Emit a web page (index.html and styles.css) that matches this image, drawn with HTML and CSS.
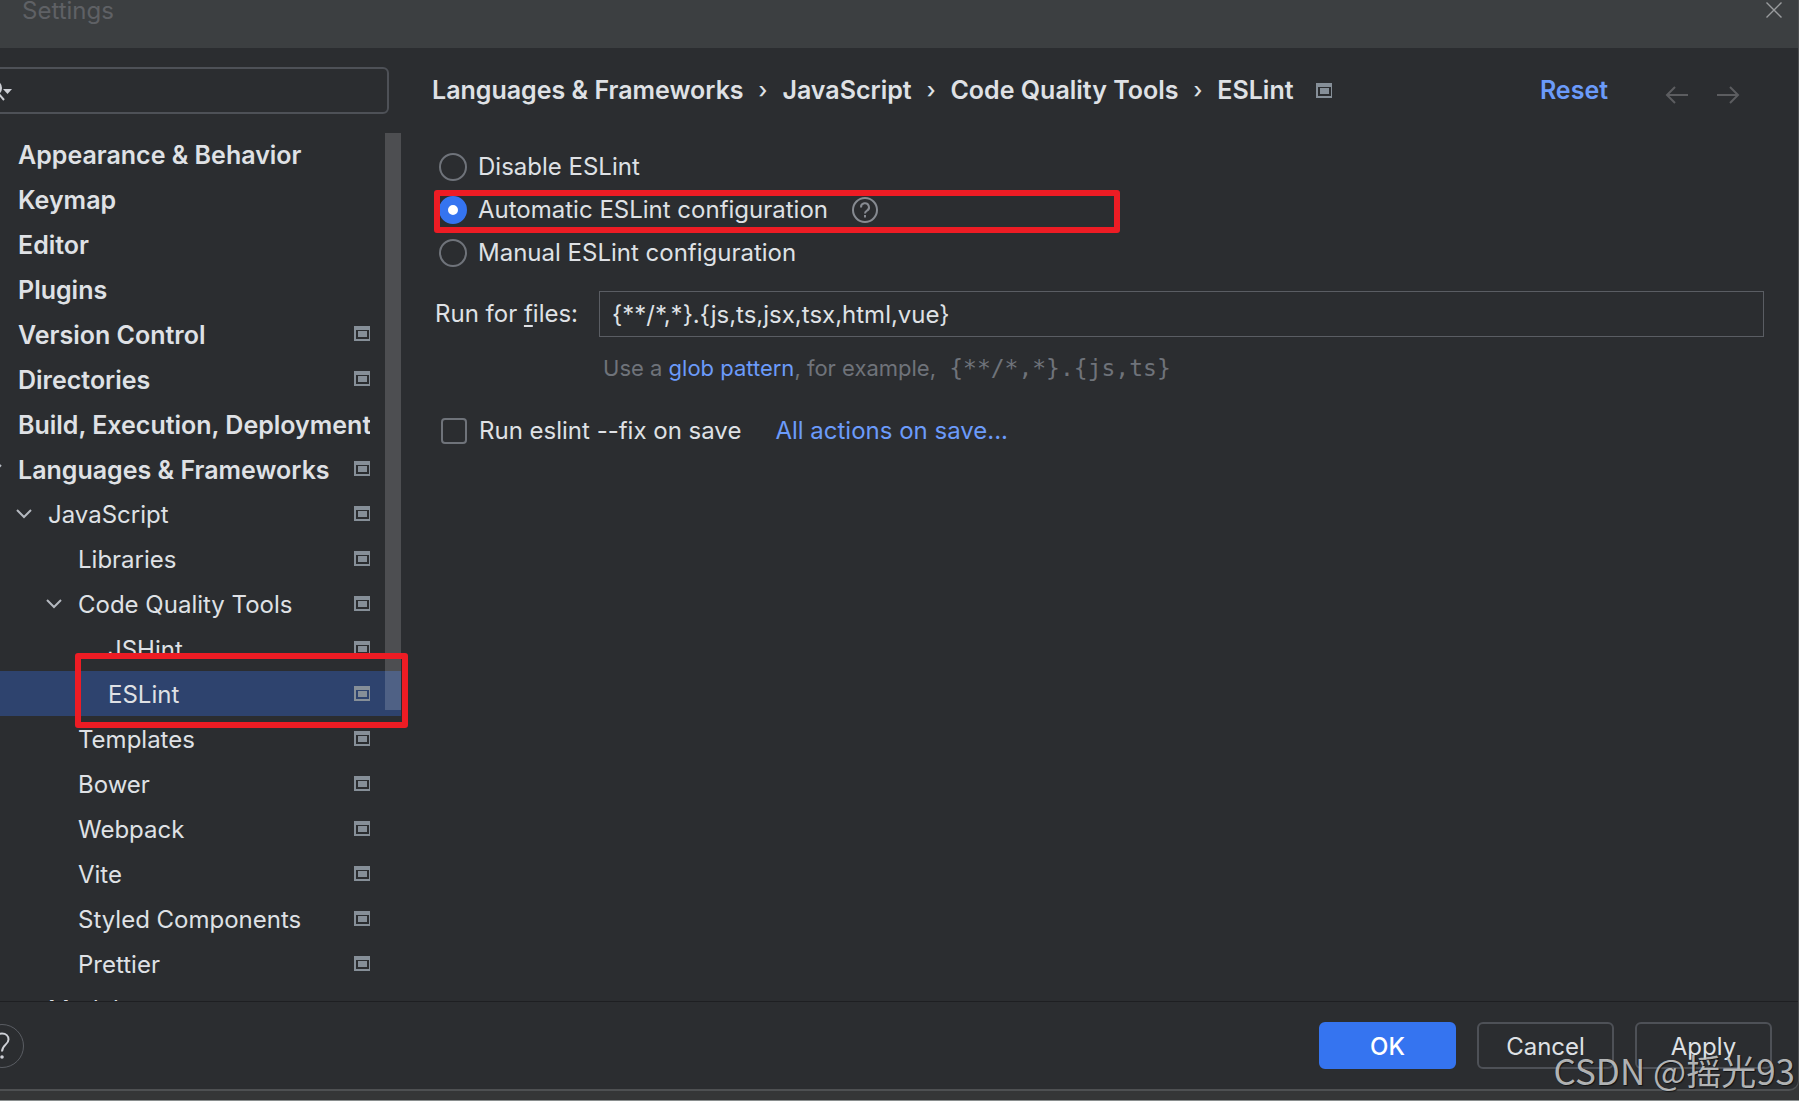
FILE: index.html
```html
<!DOCTYPE html>
<html lang="en">
<head>
<meta charset="utf-8">
<title>Settings</title>
<link rel="stylesheet" href="styles.css">
</head>
<body>
<svg width="0" height="0" class="defs" aria-hidden="true">
  <symbol id="project" viewBox="0 0 16 15"><path fill="currentColor" fill-rule="evenodd" d="M0 0h16v15H0zM2 4v9h13V4z"/><path fill="currentColor" d="M4 5h9v6H4z"/></symbol>
  <symbol id="chevron" viewBox="0 0 16 10"><path fill="none" stroke="currentColor" stroke-width="2" d="M1 1l7 7 7-7"/></symbol>
</svg>
<div class="window">
  <header class="titlebar">
    <h1>Settings</h1>
    <button class="icon-button" aria-label="Close"><svg width="16" height="16" viewBox="0 0 16 16"><path fill="none" stroke="#9a9c9e" stroke-width="1.4" d="M.5.5l15 15M15.5.5l-15 15"/></svg></button>
  </header>
  <div class="content">
    <aside class="sidebar">
      <div class="search">
        <svg width="28" height="24" viewBox="0 0 28 24" aria-hidden="true"><circle cx="8" cy="9" r="7" fill="none" stroke="#ced0d6" stroke-width="2"/><path stroke="#ced0d6" stroke-width="2" d="M12 14l6 7"/><path fill="#ced0d6" d="M17 10h9l-4.500 5z"/></svg>
        <input type="search" aria-label="Search settings">
      </div>
      <div class="tree-view">
        <ul class="tree">
          <li class="group"><span class="toggle"></span><span class="name">Appearance &amp; Behavior</span></li>
          <li class="group"><span class="toggle"></span><span class="name">Keymap</span></li>
          <li class="group"><span class="toggle"></span><span class="name">Editor</span></li>
          <li class="group"><span class="toggle"></span><span class="name">Plugins</span></li>
          <li class="group"><span class="toggle"></span><span class="name">Version Control</span><svg class="mark"><use href="#project"/></svg></li>
          <li class="group"><span class="toggle"></span><span class="name">Directories</span><svg class="mark"><use href="#project"/></svg></li>
          <li class="group"><span class="toggle"></span><span class="name">Build, Execution, Deployment</span></li>
          <li class="group"><svg class="toggle"><use href="#chevron"/></svg><span class="name">Languages &amp; Frameworks</span><svg class="mark"><use href="#project"/></svg></li>
          <li class="level-1"><svg class="toggle"><use href="#chevron"/></svg><span class="name">JavaScript</span><svg class="mark"><use href="#project"/></svg></li>
          <li class="level-2"><span class="toggle"></span><span class="name">Libraries</span><svg class="mark"><use href="#project"/></svg></li>
          <li class="level-2"><svg class="toggle"><use href="#chevron"/></svg><span class="name">Code Quality Tools</span><svg class="mark"><use href="#project"/></svg></li>
          <li class="level-3"><span class="toggle"></span><span class="name">JSHint</span><svg class="mark"><use href="#project"/></svg></li>
          <li class="level-3 selected"><span class="toggle"></span><span class="name">ESLint</span><svg class="mark"><use href="#project"/></svg><span class="callout callout-tree"></span></li>
          <li class="level-2"><span class="toggle"></span><span class="name">Templates</span><svg class="mark"><use href="#project"/></svg></li>
          <li class="level-2"><span class="toggle"></span><span class="name">Bower</span><svg class="mark"><use href="#project"/></svg></li>
          <li class="level-2"><span class="toggle"></span><span class="name">Webpack</span><svg class="mark"><use href="#project"/></svg></li>
          <li class="level-2"><span class="toggle"></span><span class="name">Vite</span><svg class="mark"><use href="#project"/></svg></li>
          <li class="level-2"><span class="toggle"></span><span class="name">Styled Components</span><svg class="mark"><use href="#project"/></svg></li>
          <li class="level-2"><span class="toggle"></span><span class="name">Prettier</span><svg class="mark"><use href="#project"/></svg></li>
          <li class="level-1"><span class="toggle"></span><span class="name">Modules</span></li>
        </ul>
        <span class="scroll-thumb"></span>
      </div>
    </aside>
    <main class="panel">
      <div class="panel-head">
        <nav class="breadcrumb" aria-label="Breadcrumb">
          <span>Languages &amp; Frameworks</span><span class="sep">›</span><span>JavaScript</span><span class="sep">›</span><span>Code Quality Tools</span><span class="sep">›</span><span>ESLint</span>
        </nav>
        <svg class="mark"><use href="#project"/></svg>
        <a class="reset" href="#">Reset</a>
        <div class="history">
          <button class="icon-button" aria-label="Back"><svg width="24" height="18" viewBox="0 0 24 18"><path fill="none" stroke="#5c5d60" stroke-width="2" d="M23 9H2M10 1L2 9l8 8"/></svg></button>
          <button class="icon-button" aria-label="Forward"><svg width="24" height="18" viewBox="0 0 24 18"><path fill="none" stroke="#5c5d60" stroke-width="2" d="M1 9h21M14 1l8 8-8 8"/></svg></button>
        </div>
      </div>
      <form class="form">
        <div class="radios">
          <label class="option"><input type="radio" name="mode"><span>Disable ESLint</span></label>
          <div class="option-row">
            <label class="option"><input type="radio" name="mode" checked><span>Automatic ESLint configuration</span></label>
            <svg width="26" height="26" viewBox="0 0 26 26" fill="none" stroke="#868a91" stroke-width="2"><circle cx="13" cy="13" r="12"/><path d="M9 10.500a4 4 0 1 1 6 3.200c-1.300.8-2 1.300-2 2.800"/><path d="M13 18v2.500"/></svg>
            <span class="callout callout-radio"></span>
          </div>
          <label class="option"><input type="radio" name="mode"><span>Manual ESLint configuration</span></label>
        </div>
        <div class="files">
          <label for="files">Run for <u>f</u>iles:</label>
          <input id="files" type="text" value="{**/*,*}.{js,ts,jsx,tsx,html,vue}">
          <p class="hint">Use a <a href="#">glob pattern</a>, for example, <code>{**/*,*}.{js,ts}</code></p>
        </div>
        <div class="save">
          <label class="option"><input type="checkbox"><span>Run eslint --fix on save</span></label>
          <a href="#">All actions on save...</a>
        </div>
      </form>
    </main>
  </div>
  <footer class="footer">
    <button class="help" aria-label="Help"><svg width="16" height="28" viewBox="0 0 16 28"><path fill="none" stroke="#ced0d6" stroke-width="2" d="M1 8c0-4 3-6.500 7-6.500s6.500 2.500 6.500 6c0 5-6.500 5.500-6.500 12"/><circle cx="8" cy="25" r="1.800" fill="#ced0d6"/></svg></button>
    <button class="button primary">OK</button>
    <button class="button">Cancel</button>
    <button class="button">Apply</button>
  </footer>
</div>
<span class="watermark">CSDN @摇光93</span>
</body>
</html>
```
FILE: styles.css
```css
* { box-sizing: border-box; }
html { height: 100%; background: #353637; }
body {
  position: relative;
  display: flex;
  height: 100vh;
  margin: 0;
  padding-bottom: 9px;
  border-bottom: 1px solid #8a8f8f;
  overflow: hidden;
  color: #dfe1e5;
  font: 24px/32px Inter, sans-serif;
}
button, input { font: inherit; color: inherit; }
a { color: #6b9bfa; text-decoration: none; }
.defs { position: absolute; }

.window {
  flex: 1;
  display: flex;
  flex-direction: column;
  min-width: 0;
  overflow: hidden;
  background: #2b2d30;
  border: solid #4e5052;
  border-width: 0 1px 2px 0;
  border-radius: 0 0 10px 0;
}
.titlebar {
  display: flex;
  flex: none;
  justify-content: space-between;
  align-items: flex-start;
  height: 48px;
  padding: 0 16px 0 22px;
  background: #3c3f41;
}
.titlebar h1 { margin: 0; color: #5f6165; font-size: 24px; font-weight: 400; line-height: 22px; }
.icon-button { display: flex; padding: 2px 0; background: none; border: 0; }

.content { display: flex; flex: 1; min-height: 0; }
.sidebar { display: flex; flex-direction: column; flex: none; width: 432px; padding-top: 19px; }
.search {
  display: flex;
  align-items: center;
  width: 405px;
  height: 47px;
  margin-left: -16px;
  border: 2px solid #4e5157;
  border-radius: 6px;
}
.search input { flex: 1; min-width: 0; padding: 0 8px; background: none; border: 0; outline: 0; }
.tree-view { position: relative; flex: 1; min-height: 0; margin-top: 17px; }
.tree { height: 100%; margin: 0; padding: 0; overflow: hidden; list-style: none; }
.tree li { position: relative; display: flex; align-items: center; width: 401px; height: 45px; padding-right: 31px; }
.tree .toggle { flex: none; width: 16px; height: 10px; margin: 0 16px 0 -14px; color: #b4b8bf; }
.tree .name { flex: 1; min-width: 0; padding-top: 2px; overflow: hidden; white-space: nowrap; }
.tree .group { font-size: 25px; font-weight: 600; }
.tree .level-1 { padding-left: 30px; }
.tree .level-2 { padding-left: 60px; }
.tree .level-3 { padding-left: 90px; }
.tree .selected { background: #2e436e; }
.mark { flex: none; width: 16px; height: 15px; color: #868f98; }
.scroll-thumb { position: absolute; top: 2px; left: 385px; width: 16px; height: 577px; background: rgb(255 255 255 / 16%); }
.callout { position: absolute; z-index: 1; border: 6px solid #ed1c24; border-radius: 3px; pointer-events: none; }
.callout-tree { top: -18px; right: -7px; bottom: -12px; left: 75px; }

.panel { flex: 1; min-width: 0; padding: 25px 34px 0 0; }
.panel-head { display: flex; align-items: center; height: 34px; padding-right: 24px; }
.breadcrumb { display: flex; gap: 15px; margin-right: 22px; font-size: 25px; font-weight: 600; white-space: nowrap; }
.breadcrumb .sep { font-size: 22px; font-weight: 500; }
.reset { margin-left: auto; font-size: 25px; font-weight: 600; }
.history { display: flex; gap: 27px; margin: 10px 0 0 57px; }

.form { padding-top: 38px; }
.option { display: flex; align-items: center; gap: 11px; height: 43px; }
.option input { appearance: none; flex: none; width: 28px; height: 28px; margin: 0; border: 2px solid #6f737a; }
.option [type="radio"] { border-radius: 50%; }
.option [type="radio"]:checked { border: 9px solid #3574f0; background: #fff; }
.option [type="checkbox"] { width: 26px; height: 26px; margin-right: 1px; border-radius: 4px; }
.radios { padding-left: 7px; }
.option-row { position: relative; display: flex; align-items: center; gap: 24px; }
.callout-radio { top: 2px; left: -5px; width: 686px; height: 43px; }
.files { display: grid; grid-template-columns: auto 1fr; align-items: center; column-gap: 21px; margin-top: 17px; padding-left: 3px; }
.files input { min-width: 0; height: 46px; padding: 0 12px; background: none; border: 1px solid #5a5d63; border-radius: 0; outline: 0; }
.files u { text-underline-offset: 3px; text-decoration-thickness: 2px; }
.hint { grid-column: 2; margin: 15px 0 0 4px; color: #6f737a; font-size: 22px; }
.hint code { margin-left: 7px; font-family: "DejaVu Sans Mono", monospace; font-size: 23px; }
.save { display: flex; align-items: center; gap: 34px; margin-top: 25px; padding-left: 9px; }

.footer { display: flex; flex: none; gap: 21px; height: 88px; padding: 20px 26px 0 0; border-top: 1px solid #1e1f22; }
.help {
  display: flex;
  align-items: center;
  justify-content: center;
  width: 44px;
  height: 44px;
  margin: 2px auto 0 -20px;
  padding: 0;
  background: none;
  border: 1px solid #5a5d63;
  border-radius: 50%;
}
.button { width: 137px; height: 47px; padding: 2px 0 0; background: none; border: 2px solid #4e5157; border-radius: 6px; }
.primary { background: #3574f0; border-color: #3574f0; color: #fff; font-weight: 500; }
.watermark {
  position: absolute;
  right: 4px;
  bottom: 6px;
  color: rgb(205 207 208 / 85%);
  font: 35px/48px "Noto Sans CJK SC", sans-serif;
  text-shadow: 1px 1px 1px rgb(0 0 0 / 60%);
  pointer-events: none;
}
```
